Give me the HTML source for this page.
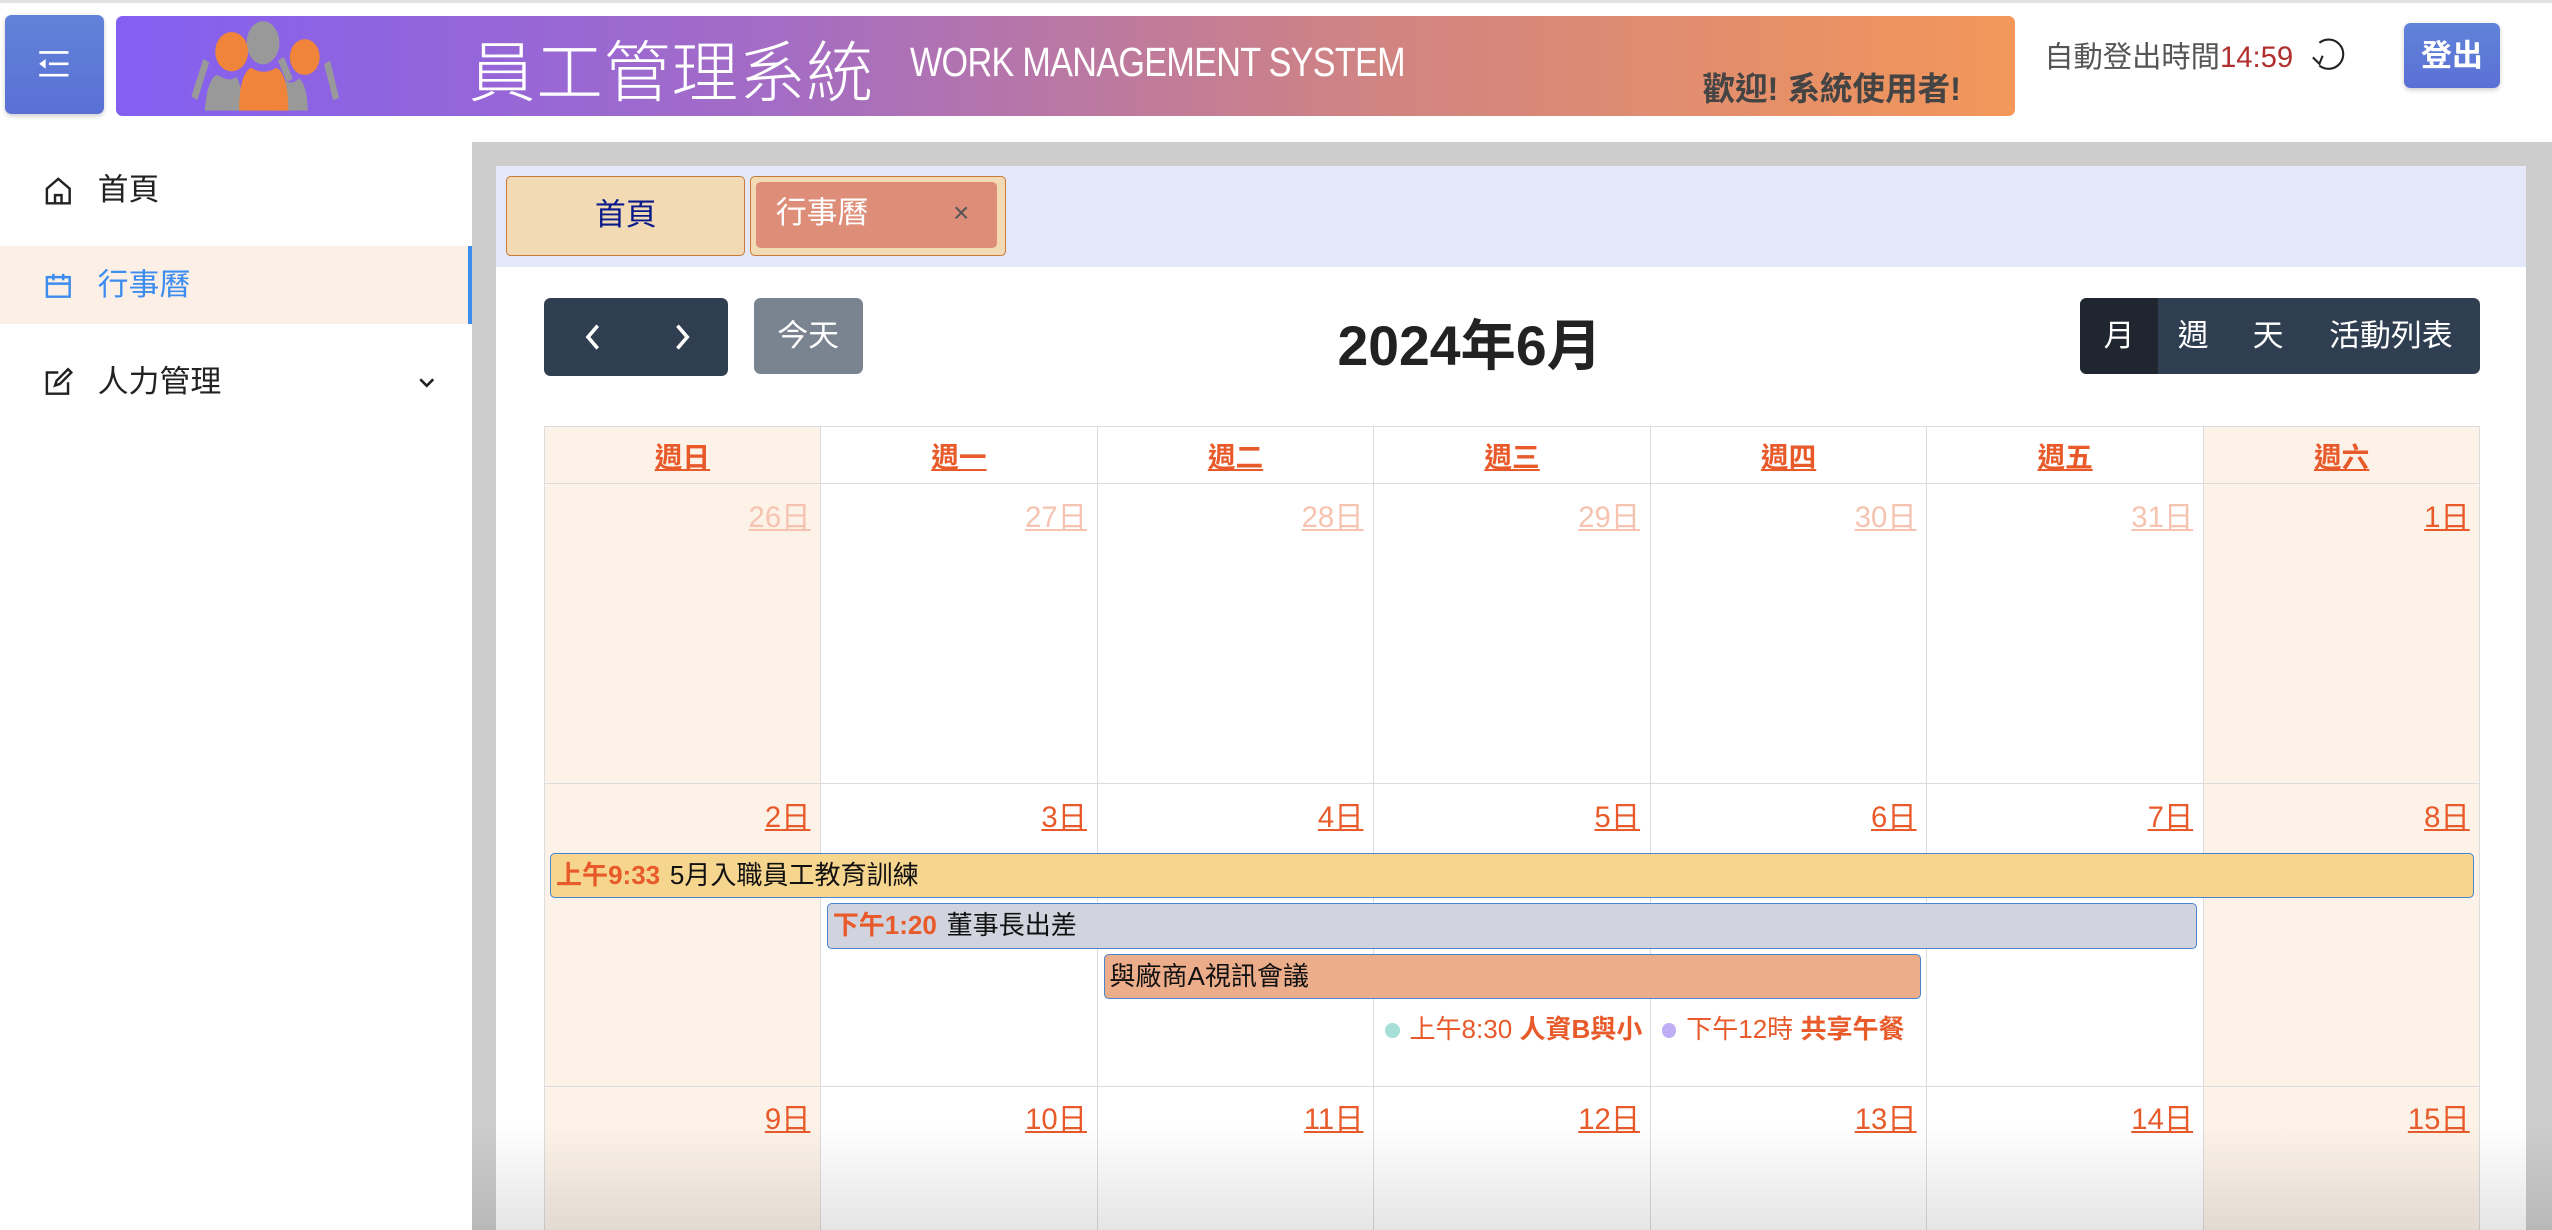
<!DOCTYPE html>
<html><head><meta charset="utf-8">
<style>
*{box-sizing:border-box;margin:0;padding:0}
html,body{width:2552px;height:1230px;overflow:hidden;background:#fff}
#root{zoom:1.6276;width:1568px;height:756px;position:relative;font-family:"Liberation Sans","Noto Sans CJK TC",sans-serif;overflow:hidden}
.abs{position:absolute}
#top{left:0;top:0;width:1568px;height:87px;background:#fff;border-top:2px solid #e2e2e2}
#menu{left:3px;top:9px;width:61px;height:61px;border-radius:4px;background:linear-gradient(#6183d8,#5a70d6);box-shadow:0 1px 3px rgba(0,0,0,.2)}
#banner{left:71px;top:10px;width:1167px;height:61px;border-radius:4px;background:linear-gradient(90deg,#835ff2 0%,#a46cc4 35%,#cf8384 65%,#f3975a 100%)}
#sidebar{left:0;top:87px;width:290px;height:669px;background:#fff}
#main{left:290px;top:87px;width:1278px;height:669px;background:#cdcdcd}
.item{position:absolute;left:0;width:290px;height:48px;font-size:19px;color:#222;line-height:48px;padding-left:60px}
.item svg{position:absolute;left:26px;top:14px}
th,td{border:1px solid #dcdcdc}
table{border-collapse:collapse;table-layout:fixed;position:absolute;left:334px;top:262px;width:1190px}
th{height:35px;font-size:17px;color:#e85a2a;text-decoration:underline;font-weight:bold;background:#fff}
td{vertical-align:top;text-align:right;padding:6px 6px 0 0;font-size:18px;color:#e85a2a;text-decoration:underline;background:#fff}
.we{background:#fcf2e8!important}
.f{color:#f6c3b0}
.ev{position:absolute;height:28px;border:1px solid #4a86d0;border-radius:3px;font-size:16px;line-height:26px;padding-left:3px;color:#111;white-space:nowrap;overflow:hidden}
.ev b{color:#e85a2a;margin-right:6px}
</style></head><body><div id="root">
<div id="top" class="abs"></div>
<div id="menu" class="abs"><svg width="61" height="61" viewBox="0 0 61 61"><g stroke="#fff" stroke-width="1.6" fill="none"><path d="M21 23h18M27 30h12M21 37h18"/></g><path d="M21 30l4-3v6z" fill="#fff"/></svg></div>
<div id="banner" class="abs"></div>
<svg class="abs" style="left:104px;top:4px" width="110" height="67" viewBox="0 0 120 61" preserveAspectRatio="none">
<g fill="#999"><ellipse cx="63" cy="20" rx="11" ry="12"/><path d="M15 50l8-21 4 2-8 21z"/><path d="M24 58c1-10 3-18 8-20 5 2 9 4 13 1 3 4 5 12 5 19z"/><path d="M70 58c0-9 2-16 6-18 3 3 8 3 11 0 4 2 6 10 6 18z"/><path d="M110 52l-6-20 4-2 6 21z"/><path d="M73 30l4-2 6 12-4 2z"/></g>
<g fill="#ef843a"><ellipse cx="42" cy="25" rx="11" ry="11"/><ellipse cx="91" cy="28" rx="10" ry="10"/><path d="M47 58c0-14 3-22 8-24 6 3 11 3 17 0 5 2 8 10 8 24z"/></g>
</svg>
<div class="abs" style="left:288px;top:12px;font-size:41px;color:#fff;font-weight:300;letter-spacing:.5px;font-family:'Noto Sans CJK TC',sans-serif">員工管理系統</div>
<div class="abs" style="left:559px;top:24px;font-size:25px;color:#fff;letter-spacing:-.5px;transform:scaleX(.84);transform-origin:left">WORK MANAGEMENT SYSTEM</div>
<div class="abs" style="left:1046px;top:39px;font-size:20px;color:#444;font-weight:bold">歡迎! 系統使用者!</div>
<div class="abs" style="left:1256px;top:21px;font-size:18px;color:#555">自動登出時間<span style="color:#b03030">14:59</span></div>
<svg class="abs" style="left:1418px;top:20px" width="26" height="26" viewBox="0 0 26 26"><path d="M7 6a9 9 0 1 1 0 14" fill="none" stroke="#222" stroke-width="1.3"/><path d="M3 15l4 4 2-5" fill="none" stroke="#222" stroke-width="1.3"/></svg>
<div class="abs" style="left:1477px;top:14px;width:59px;height:40px;border-radius:4px;background:linear-gradient(#6183d8,#5a70d6);color:#fff;font-weight:bold;font-size:19px;text-align:center;line-height:40px;box-shadow:0 1px 3px rgba(0,0,0,.2)">登出</div>

<div id="sidebar" class="abs">
<div class="item" style="top:6px"><svg width="20" height="20" viewBox="0 0 20 20"><path d="M3 9L10 3l7 6v9H3z M8 18v-5h4v5" fill="none" stroke="#222" stroke-width="1.5"/></svg>首頁</div>
<div class="item" style="top:64px;background:#fcf0e6;color:#3d8cf0;border-right:3px solid #3d8cf0"><svg width="20" height="20" viewBox="0 0 20 20"><path d="M3 5h14v12H3zM3 9h14M7 3v4M13 3v4" fill="none" stroke="#3d8cf0" stroke-width="1.5"/></svg>行事曆</div>
<div class="item" style="top:124px"><svg width="20" height="20" viewBox="0 0 20 20"><path d="M10 4H3v13h13v-7M8 12l1-3 7-7 2 2-7 7z" fill="none" stroke="#222" stroke-width="1.5"/></svg>人力管理<svg style="left:256px;top:20px" width="12" height="8" viewBox="0 0 12 8"><path d="M2 2l4 4 4-4" fill="none" stroke="#222" stroke-width="1.6"/></svg></div>
</div>
<div id="main" class="abs"></div>
<div class="abs" style="left:305px;top:102px;width:1247px;height:62px;background:#e4e8f8"></div>
<div class="abs" style="left:311px;top:108px;width:147px;height:49px;background:#f2dab4;border:1px solid #c87a3a;border-radius:3px;color:#0a1a8a;font-size:19px;text-align:center;line-height:47px">首頁</div>
<div class="abs" style="left:461px;top:108px;width:157px;height:49px;background:#f2dab4;border:1px solid #c87a3a;border-radius:3px"><div style="position:absolute;left:3px;top:3px;width:148px;height:41px;background:#dd8d78;border-radius:3px;color:#fff;font-size:19px;line-height:38px;padding-left:12px">行事曆<span style="position:absolute;left:121px;color:#555;font-size:17px">×</span></div></div>
<div class="abs" style="left:305px;top:164px;width:1247px;height:600px;background:#fff"></div>

<div class="abs" style="left:334px;top:183px;width:113px;height:48px;background:#2f3e50;border-radius:4px"><svg width="113" height="48"><g stroke="#fff" stroke-width="2.2" fill="none"><path d="M33 17l-6 7 6 7M82 17l6 7-6 7"/></g></svg></div>
<div class="abs" style="left:463px;top:183px;width:67px;height:47px;background:#7a8390;border-radius:4px;color:#fff;font-size:19px;text-align:center;line-height:47px">今天</div>
<div class="abs" style="left:703px;top:185px;width:400px;text-align:center;font-size:34px;font-weight:bold;color:#222">2024年6月</div>
<div class="abs" style="left:1278px;top:183px;width:246px;height:47px;background:#2f3e50;border-radius:4px;color:#fff;font-size:19px;line-height:47px;overflow:hidden">
<span style="position:absolute;left:0;width:48px;height:47px;background:#1f262f;text-align:center">月</span>
<span style="position:absolute;left:60px">週</span><span style="position:absolute;left:106px">天</span><span style="position:absolute;left:153px">活動列表</span></div>

<table>
<tr><th class="we">週日</th><th>週一</th><th>週二</th><th>週三</th><th>週四</th><th>週五</th><th class="we">週六</th></tr>
<tr style="height:184px"><td class="we f">26日</td><td class="f">27日</td><td class="f">28日</td><td class="f">29日</td><td class="f">30日</td><td class="f">31日</td><td class="we">1日</td></tr>
<tr style="height:186px"><td class="we">2日</td><td>3日</td><td>4日</td><td>5日</td><td>6日</td><td>7日</td><td class="we">8日</td></tr>
<tr style="height:120px"><td class="we">9日</td><td>10日</td><td>11日</td><td>12日</td><td>13日</td><td>14日</td><td class="we">15日</td></tr>
</table>
<div class="ev" style="left:338px;top:524px;width:1182px;background:#f6d58e"><b>上午9:33</b>5月入職員工教育訓練</div>
<div class="ev" style="left:508px;top:555px;width:842px;background:#d1d3df"><b>下午1:20</b>董事長出差</div>
<div class="ev" style="left:678px;top:586px;width:502px;background:#ebad8a">與廠商A視訊會議</div>
<div class="abs" style="left:851px;top:620px;width:162px;font-size:16px;color:#e85a2a;white-space:nowrap;overflow:hidden"><span style="display:inline-block;width:9px;height:9px;border-radius:50%;background:#a6ded8;margin-right:6px"></span>上午8:30 <b>人資B與小</b></div>
<div class="abs" style="left:1021px;top:620px;width:162px;font-size:16px;color:#e85a2a;white-space:nowrap;overflow:hidden"><span style="display:inline-block;width:9px;height:9px;border-radius:50%;background:#c0aef5;margin-right:6px"></span>下午12時 <b>共享午餐</b></div>
<div class="abs" style="left:290px;top:690px;width:1278px;height:66px;background:linear-gradient(rgba(0,0,0,0),rgba(0,0,0,.1))"></div>
</div></body></html>
